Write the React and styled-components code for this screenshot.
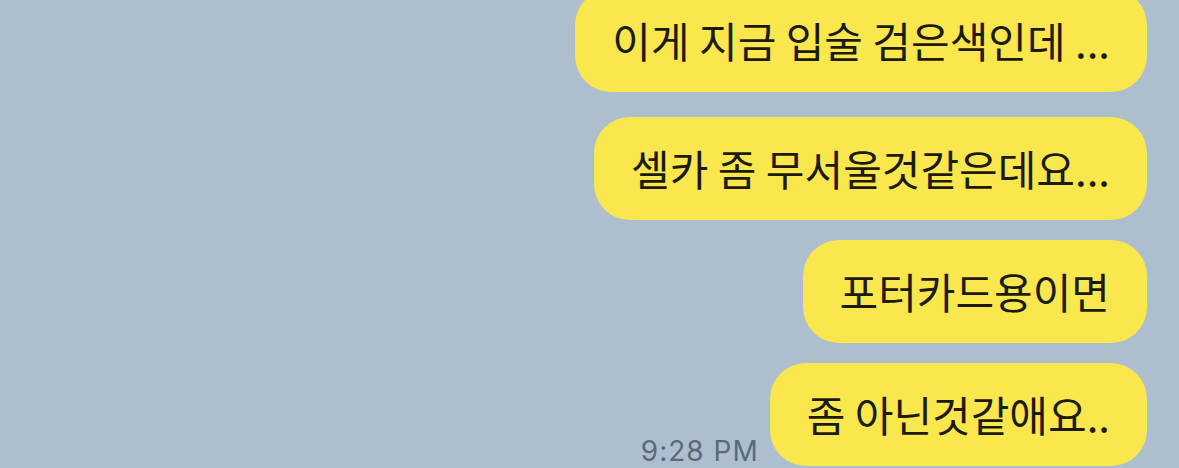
import React from "react";
import styled, { createGlobalStyle } from "styled-components";

const GlobalStyle = createGlobalStyle`
  html, body {
    margin: 0;
    padding: 0;
    background: #adbfcf;
    overflow: hidden;
  }
  body {
    width: 1179px;
    height: 468px;
    font-family: "Noto Sans CJK KR", "Noto Sans", sans-serif;
  }
`;

const Chat = styled.div`
  display: flex;
  flex-direction: column;
  align-items: flex-end;
  gap: 20px;
  padding-right: 32px;
  margin-top: -11px;
`;

const Row = styled.div`
  display: flex;
  align-items: flex-end;
  gap: 11px;
  margin-bottom: ${(p) => p.$extra || 0}px;
`;

const Bubble = styled.div`
  box-sizing: border-box;
  height: 103px;
  display: flex;
  align-items: center;
  padding: 0 37px 2px 37px;
  background: #fae74e;
  border-radius: 36px;
  color: #1d1b10;
  font-family: "Noto Sans CJK KR", "Noto Sans", sans-serif;
  font-size: 42px;
  line-height: 1;
  white-space: nowrap;
`;

const Time = styled.span`
  font-family: Inter, "Liberation Sans", sans-serif;
  font-size: 28px;
  letter-spacing: 1px;
  line-height: 1;
  color: #5b6a78;
  margin-bottom: 1px;
  white-space: nowrap;
`;

const messages = [
  { text: "이게 지금 입술 검은색인데 ...", extra: 5 },
  { text: "셀카 좀 무서울것같은데요..." },
  { text: "포터카드용이면" },
  { text: "좀 아닌것같애요..", time: "9:28 PM" },
];

export default function App() {
  return (
    <>
      <GlobalStyle />
      <Chat>
        {messages.map((m, i) => (
          <Row key={i} $extra={m.extra}>
            {m.time && <Time>{m.time}</Time>}
            <Bubble>{m.text}</Bubble>
          </Row>
        ))}
      </Chat>
    </>
  );
}
